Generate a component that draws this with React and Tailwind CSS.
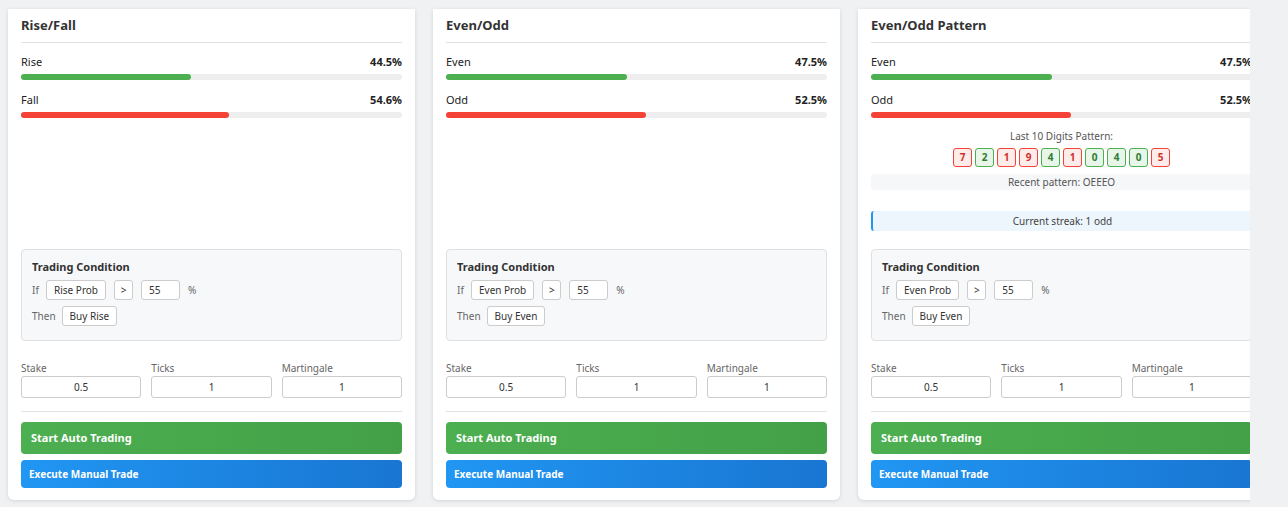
import React from "react";

const cards = [
  {
    title: "Rise/Fall",
    rows: [
      { label: "Rise", value: 44.5, color: "bg-[#4caf50]" },
      { label: "Fall", value: 54.6, color: "bg-[#f44336]" },
    ],
    prob: "Rise Prob",
    buy: "Buy Rise",
  },
  {
    title: "Even/Odd",
    rows: [
      { label: "Even", value: 47.5, color: "bg-[#4caf50]" },
      { label: "Odd", value: 52.5, color: "bg-[#f44336]" },
    ],
    prob: "Even Prob",
    buy: "Buy Even",
  },
  {
    title: "Even/Odd Pattern",
    rows: [
      { label: "Even", value: 47.5, color: "bg-[#4caf50]" },
      { label: "Odd", value: 52.5, color: "bg-[#f44336]" },
    ],
    prob: "Even Prob",
    buy: "Buy Even",
    pattern: [7, 2, 1, 9, 4, 1, 0, 4, 0, 5],
  },
];

function Pattern({ digits }) {
  return (
    <div className="mt-[11px]">
      <div className="text-center text-[10px] leading-[14px] text-[#555]">Last 10 Digits Pattern:</div>
      <div className="flex justify-center gap-[3px] mt-[5px]">
        {digits.map((d, i) =>
          d % 2 === 0 ? (
            <div key={i} className="w-[19px] h-[19px] flex items-center justify-center rounded-[3px] border border-[#4caf50] bg-[#e8f5e9] text-[10px] font-bold text-[#2e7d32]">
              {d}
            </div>
          ) : (
            <div key={i} className="w-[19px] h-[19px] flex items-center justify-center rounded-[3px] border border-[#f44336] bg-[#fdecea] text-[10px] font-bold text-[#d32f2f]">
              {d}
            </div>
          )
        )}
      </div>
      <div className="mt-[7px] h-[16px] rounded-[3px] bg-[#f6f7f9] text-center text-[10px] leading-[16px] text-[#555]">
        Recent pattern: OEEEO
      </div>
      <div className="mt-[21px] h-[20px] rounded-[3px] border-l-2 border-[#2196f3] bg-[#edf5fd] text-center text-[10px] leading-[20px] text-[#444]">
        Current streak: 1 odd
      </div>
    </div>
  );
}

function Card({ c }) {
  return (
    <div className="w-[407px] shrink-0 h-[491px] bg-white rounded-b-md shadow-[0_1px_4px_rgba(0,0,0,0.12)] px-[13px] pb-[12px] flex flex-col">
      <div className="pt-[7px] pb-[8px] border-b border-[#e2e2e2] text-[13px] leading-[18px] font-bold text-[#333]">
        {c.title}
      </div>
      <div className="pt-[11px]">
        {c.rows.map((r, i) => (
          <div key={r.label} className={i > 0 ? "mt-[12px]" : ""}>
            <div className="flex justify-between text-[11px] leading-[16px] text-[#222]">
              <span>{r.label}</span>
              <span className="font-bold">{r.value}%</span>
            </div>
            <div className="mt-[4px] h-[6px] rounded-full bg-[#eeeeee]">
              <div className={`h-full rounded-full ${r.color}`} style={{ width: `${r.value}%` }} />
            </div>
          </div>
        ))}
      </div>
      {c.pattern && <Pattern digits={c.pattern} />}
      <div className="mt-auto">
        <div className="h-[92px] rounded-[4px] border border-[#e0e0e0] bg-[#f7f8fa] px-[10px] pt-[9px]">
          <div className="text-[11px] leading-[15px] font-bold text-[#333]">Trading Condition</div>
          <div className="mt-[6px] flex items-center gap-[8px] text-[10px] text-[#666]">
            <span className="w-[6px]">If</span>
            <span className="h-[20px] px-[7px] flex items-center rounded-[3px] border border-[#ccc] bg-white text-[#333]">{c.prob}</span>
            <span className="h-[20px] w-[19px] flex items-center justify-center rounded-[3px] border border-[#ccc] bg-white text-[#333]">&gt;</span>
            <span className="h-[20px] w-[39px] px-[7px] flex items-center rounded-[3px] border border-[#ccc] bg-white text-[#333]">55</span>
            <span>%</span>
          </div>
          <div className="mt-[6px] flex items-center gap-[6px] text-[10px] text-[#666]">
            <span>Then</span>
            <span className="h-[20px] px-[7px] flex items-center rounded-[3px] border border-[#ccc] bg-white text-[#333]">{c.buy}</span>
          </div>
        </div>
        <div className="mt-[20px] grid grid-cols-3 gap-[10px]">
          {[["Stake", "0.5"], ["Ticks", "1"], ["Martingale", "1"]].map(([l, v]) => (
            <div key={l}>
              <div className="text-[10px] leading-[14px] text-[#666]">{l}</div>
              <div className="mt-[1px] h-[22px] rounded-[3px] border border-[#ccc] bg-white flex items-center justify-center text-[10px] text-[#333]">
                {v}
              </div>
            </div>
          ))}
        </div>
        <div className="mt-[13px] border-t border-[#e2e2e2]" />
        <div className="mt-[10px] h-[32px] rounded-[4px] bg-gradient-to-r from-[#4caf50] to-[#43a047] flex items-center px-[10px] text-[11px] font-bold text-white">
          Start Auto Trading
        </div>
        <div className="mt-[6px] h-[28px] rounded-[4px] bg-gradient-to-r from-[#2196f3] to-[#1976d2] flex items-center px-[8px] text-[10px] font-bold text-white">
          Execute Manual Trade
        </div>
      </div>
    </div>
  );
}

export default function App() {
  return (
    <div className="w-[1288px] h-[507px] bg-[#f0f1f3] overflow-hidden" style={{ fontFamily: '"Noto Sans", "Open Sans", sans-serif' }}>
      <div className="w-[1250px] pt-[9px] overflow-hidden">
        <div className="flex gap-[18px] pl-[8px] pb-[6px]">
          {cards.map((c) => (
            <Card key={c.title} c={c} />
          ))}
        </div>
      </div>
    </div>
  );
}
